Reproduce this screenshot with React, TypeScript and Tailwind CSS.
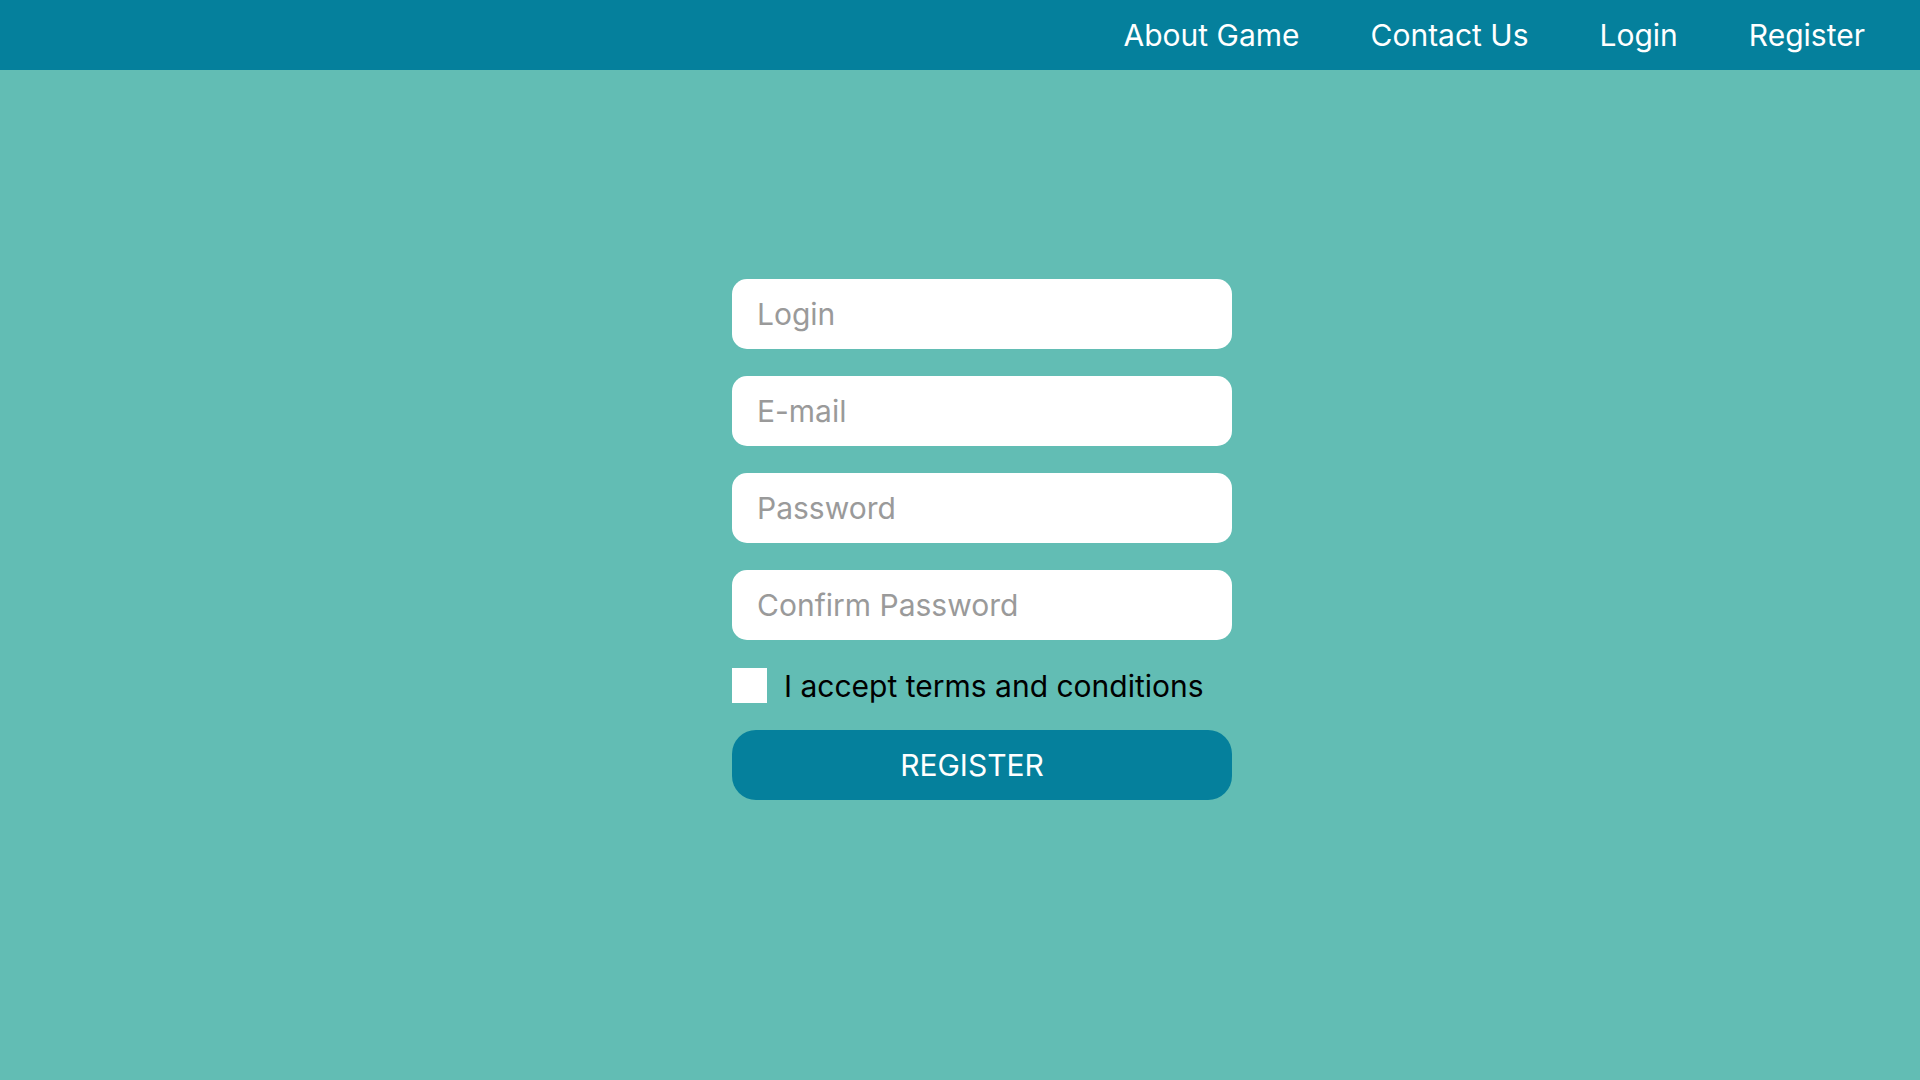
import React from "react";

export default function App() {
  const font = { fontFamily: "Inter, 'Noto Sans', sans-serif" };
  return (
    <div className="min-h-screen w-full bg-[#62bdb4] flex flex-col" style={font}>
      <header className="h-[70px] bg-[#05809c] flex items-center justify-end pr-[55px] gap-[71px] text-white text-[30px]">
        <a className="leading-none">About Game</a>
        <a className="leading-none">Contact Us</a>
        <a className="leading-none">Login</a>
        <a className="leading-none">Register</a>
      </header>
      <main className="flex justify-center pt-[209px]">
        <form className="ml-[44px] w-[500px] flex flex-col">
          <div className="flex flex-col gap-[27px]">
            {["Login", "E-mail", "Password", "Confirm Password"].map((p) => (
              <input
                key={p}
                placeholder={p}
                className="h-[70px] w-full rounded-[15px] bg-white px-[25px] text-[30px] text-black placeholder:text-[#9a9a9a] outline-none"
              />
            ))}
          </div>
          <label className="mt-[28px] flex items-center gap-[17px]">
            <span className="w-[35px] h-[35px] bg-white block" />
            <span className="text-[30px] text-black leading-none">I accept terms and conditions</span>
          </label>
          <button
            type="button"
            className="mt-[27px] h-[70px] w-full rounded-[24px] bg-[#05809c] text-white text-[30px] pr-[20px]"
          >
            REGISTER
          </button>
        </form>
      </main>
    </div>
  );
}
